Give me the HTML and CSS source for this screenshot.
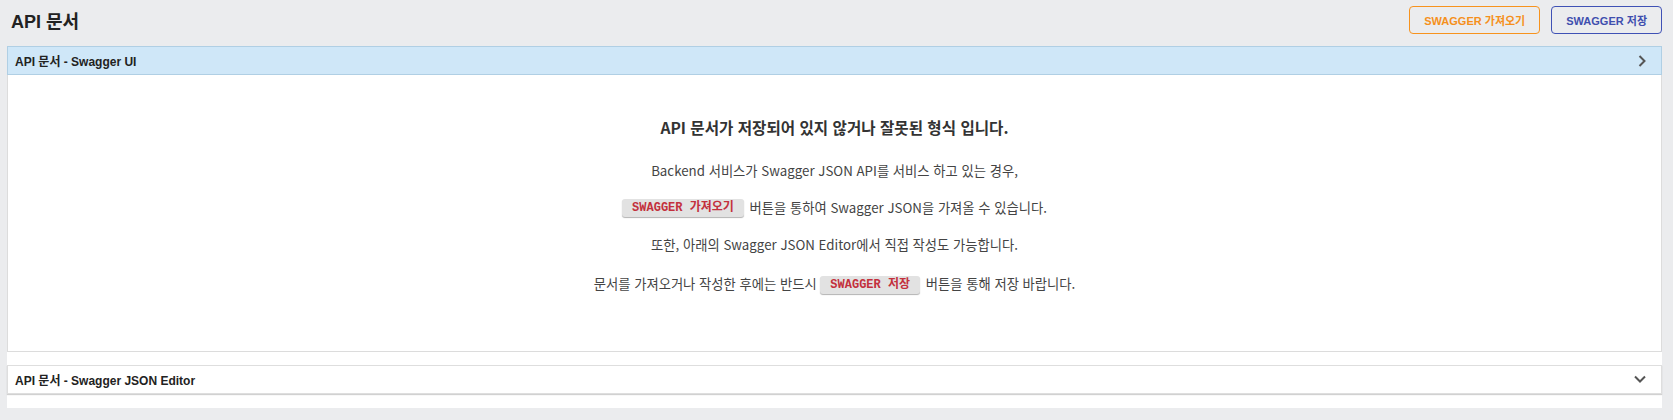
FILE: index.html
```html
<!DOCTYPE html>
<html lang="ko">
<head>
<meta charset="utf-8">
<title>API 문서</title>
<link rel="stylesheet" href="styles.css">
</head>
<body>
<div class="page">
  <div class="topbar">
    <h1 class="title">API 문서</h1>
    <div class="actions">
      <button class="btn btn-orange">SWAGGER 가져오기</button>
      <button class="btn btn-blue">SWAGGER 저장</button>
    </div>
  </div>
  <div class="card">
    <div class="panel panel-open">
      <div class="panel-head head-blue">
        <span class="panel-title">API 문서 - Swagger UI</span>
        <svg class="chev" width="10" height="14" viewBox="0 0 10 14"><path d="M2.5 2 L7.5 7 L2.5 12" fill="none" stroke="#555" stroke-width="2"/></svg>
      </div>
      <div class="panel-body">
        <h2 class="msg-title">API 문서가 저장되어 있지 않거나 잘못된 형식 입니다.</h2>
        <p class="msg">Backend 서비스가 Swagger JSON API를 서비스 하고 있는 경우,</p>
        <p class="msg"><code class="chip">SWAGGER 가져오기</code> 버튼을 통하여 Swagger JSON을 가져올 수 있습니다.</p>
        <p class="msg">또한, 아래의 Swagger JSON Editor에서 직접 작성도 가능합니다.</p>
        <p class="msg msg-last">문서를 가져오거나 작성한 후에는 반드시 <code class="chip">SWAGGER 저장</code> 버튼을 통해 저장 바랍니다.</p>
      </div>
    </div>
    <div class="panel panel-closed">
      <div class="panel-head head-white">
        <span class="panel-title">API 문서 - Swagger JSON Editor</span>
        <svg class="chev" width="14" height="10" viewBox="0 0 14 10"><path d="M2 2.5 L7 7.5 L12 2.5" fill="none" stroke="#555" stroke-width="2"/></svg>
      </div>
    </div>
  </div>
</div>
</body>
</html>
```
FILE: styles.css
```css
html, body {
  margin: 0;
  padding: 0;
  background: #ebecee;
}
body {
  font-family: "Liberation Sans", "Noto Sans CJK KR", sans-serif;
  color: #222;
}
.page {
  padding: 6px 11px 12px 7px;
}
.topbar {
  display: flex;
  justify-content: space-between;
  align-items: center;
  height: 28px;
  padding-left: 4px;
  margin-bottom: 12px;
}
.title {
  margin: 0;
  font-size: 18px;
  font-weight: bold;
  color: #222;
}
.actions {
  display: flex;
  gap: 11px;
}
.btn {
  height: 28px;
  padding: 0 14px;
  border-radius: 4px;
  background: transparent;
  font-family: "Liberation Sans", "Noto Sans CJK KR", sans-serif;
  font-size: 11px;
  font-weight: bold;
  cursor: pointer;
}
.btn-orange {
  border: 1px solid #f7931e;
  color: #f5901c;
}
.btn-blue {
  border: 1px solid #3f51b5;
  color: #3f4fae;
}
.card {
  background: #fff;
  padding-bottom: 14px;
}
.panel-head {
  box-sizing: border-box;
  height: 29px;
  display: flex;
  align-items: center;
  justify-content: space-between;
  padding: 0 14px 0 7px;
}
.head-blue {
  background: #cfe7f8;
  border: 1px solid #b0cfe4;
}
.head-white {
  background: #fff;
  border: 1px solid #dedede;
  box-shadow: 0 1px 1px rgba(0, 0, 0, 0.18);
}
.panel-title {
  font-size: 12px;
  font-weight: bold;
  color: #222;
}
.chev {
  display: block;
}
.panel-body {
  border: 1px solid #dcdcdc;
  border-top: none;
  padding: 41px 0 56px;
  text-align: center;
  font-family: "Noto Sans CJK KR", "Liberation Sans", sans-serif;
}
.msg-title {
  margin: 0 0 23px;
  font-size: 15.6px;
  line-height: 22px;
  font-weight: bold;
  color: #333;
}
.msg {
  margin: 0 0 17px;
  font-size: 13.3px;
  line-height: 20px;
  color: #444;
}
.msg-last {
  margin-top: 19px;
  margin-bottom: 0;
}
.chip {
  display: inline-block;
  height: 18px;
  line-height: 18px;
  padding: 0 10px;
  margin-right: 2px;
  vertical-align: middle;
  background: #e2e2e2;
  border-radius: 3px;
  box-shadow: 0 1px 1px rgba(0, 0, 0, 0.3);
  color: #c3303c;
  font-family: "Liberation Mono", "Noto Sans CJK KR", monospace;
  font-size: 12px;
  font-weight: bold;
  position: relative;
  top: -1px;
}
.panel-closed {
  margin-top: 13px;
}
```
